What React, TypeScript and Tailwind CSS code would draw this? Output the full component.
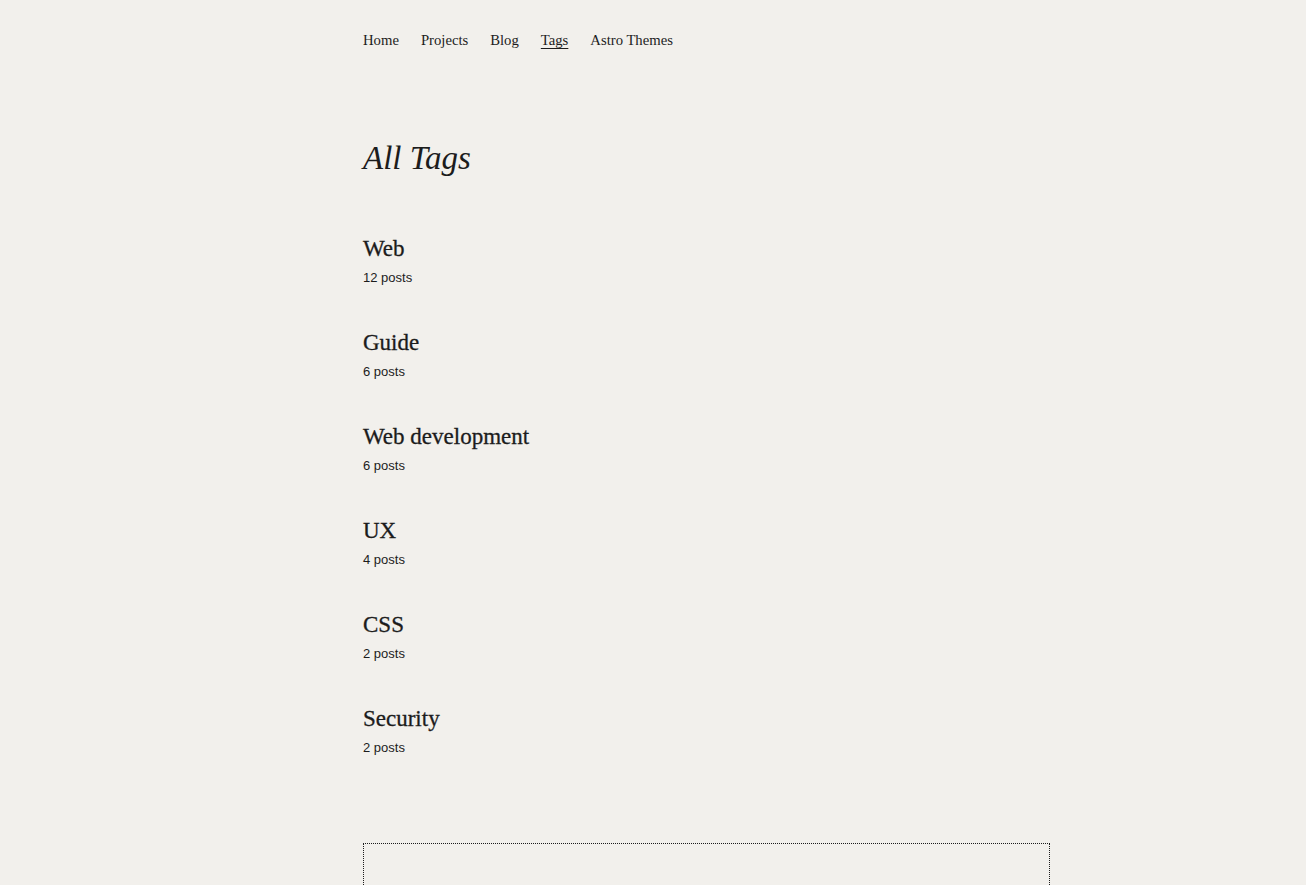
const tags = [
  { name: "Web", count: 12 },
  { name: "Guide", count: 6 },
  { name: "Web development", count: 6 },
  { name: "UX", count: 4 },
  { name: "CSS", count: 2 },
  { name: "Security", count: 2 },
];

const nav = ["Home", "Projects", "Blog", "Tags", "Astro Themes"];

export default function App() {
  return (
    <div className="min-h-[885px] bg-[#f2f0ec] text-[#1c1c1c]">
      <div className="pl-[363px]">
        <div className="w-[687px]">
          <nav className="flex gap-[22px] pt-[31px] font-['Liberation_Serif',serif] text-[14.7px] leading-[18px]">
            {nav.map((item) => (
              <a
                key={item}
                href="#"
                className={item === "Tags" ? "underline underline-offset-[3px]" : ""}
              >
                {item}
              </a>
            ))}
          </nav>

          <h1 className="mt-[89px] font-['Liberation_Serif',serif] text-[33px] italic leading-[40px]">
            All Tags
          </h1>

          <ul className="mt-[56px] flex flex-col gap-[41px]">
            {tags.map((t) => (
              <li key={t.name}>
                <h2 className="font-['Liberation_Serif',serif] text-[23px] leading-[30px] [-webkit-text-stroke:0.3px_#1c1c1c]">
                  {t.name}
                </h2>
                <p className="mt-[5px] font-['Liberation_Sans',sans-serif] text-[13px] leading-[18px]">
                  {t.count} posts
                </p>
              </li>
            ))}
          </ul>

          <div className="mt-[86px] h-[60px] border border-dotted border-[#1c1c1c]" />
        </div>
      </div>
    </div>
  );
}
